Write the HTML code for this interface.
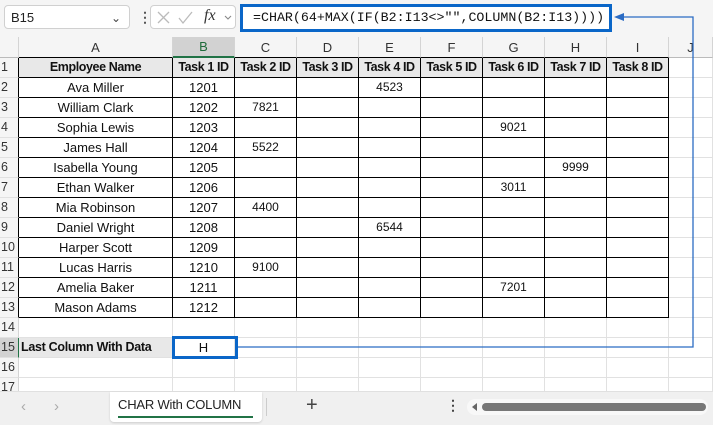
<!DOCTYPE html>
<html><head><meta charset="utf-8">
<style>
body{margin:0;width:713px;height:424px;overflow:hidden;background:#fff;font-family:"Liberation Sans",Arial,sans-serif;position:relative}
.top{position:absolute;left:0;top:0;width:713px;height:37px;background:#f5f5f5}
.nb{position:absolute;left:4px;top:5px;width:126px;height:24px;background:#fff;border:1px solid #d0d0d0;border-radius:4px;font-size:13px;line-height:24px;box-sizing:border-box;padding-left:6px;color:#222}
.fxb{position:absolute;left:150px;top:5px;width:86px;height:24px;background:#fff;border:1px solid #d0d0d0;border-radius:4px;box-sizing:border-box}
.fb{position:absolute;left:240px;top:4px;width:372px;height:28px;border:3px solid #0a66c8;box-sizing:border-box;background:#fff;font-family:"Liberation Mono",monospace;font-size:13.3px;line-height:22px;padding-left:10px;color:#111;white-space:nowrap}
table{position:absolute;left:0;top:37px;border-collapse:separate;border-spacing:0;table-layout:fixed}
td{border-right:1px solid #e1e1e1;border-bottom:1px solid #e1e1e1;height:19px;padding:0;text-align:center;font-size:13px;line-height:19px;white-space:nowrap;overflow:hidden;color:#111}
tr.ch td{background:#f5f5f5;color:#333;font-size:13px;border-right-color:#d4d4d4;border-bottom-color:#bbb}
tr.ch td.k{border-bottom:1px solid #000}
td.rh{background:#f5f5f5;color:#333;text-align:left;padding-left:1px;font-size:12.5px;border-right-color:#d4d4d4}
td.rh.k{border-right:1px solid #000}
td.d{border-right:1px solid #000;border-bottom:1px solid #000}
tr.h td.d{background:#e8e8e8;font-weight:bold;font-size:12.5px;letter-spacing:-0.4px}
td.n{font-size:12px}
.tabs{position:absolute;left:0;top:391px;width:713px;height:33px;background:#f0f0f0;border-top:1px solid #e0e0e0}
</style></head><body>
<div class="top"></div>
<div class="nb">B15<span style="position:absolute;right:8px;top:0;font-size:12px;color:#444">&#8964;</span></div>
<div style="position:absolute;left:138px;top:9px;font-size:14px;color:#555;font-weight:bold">&#8942;</div>
<div class="fxb">
<svg width="86" height="24" style="position:absolute;left:0;top:0"><path d="M7 6l11 11M18 6L7 17" stroke="#bbb" stroke-width="1.3" fill="none"/><path d="M28 12l4 5 9-11" stroke="#bbb" stroke-width="1.3" fill="none"/><path d="M74 10l3 3 3-3" stroke="#888" stroke-width="1.1" fill="none"/></svg>
<span style="position:absolute;left:53px;top:1px;font-family:'Liberation Serif',serif;font-style:italic;font-size:16px;color:#333">fx</span></div>
<div class="fb">=CHAR(64+MAX(IF(B2:I13&lt;&gt;"",COLUMN(B2:I13))))</div>

<table>
<colgroup><col style="width:19px"><col style="width:154px"><col style="width:62px"><col style="width:62px"><col style="width:62px"><col style="width:62px"><col style="width:62px"><col style="width:62px"><col style="width:62px"><col style="width:62px"><col style="width:44px"></colgroup>
<tr class="ch"><td></td><td class="k">A</td><td class="k" style="background:#d2d2d2;color:#1e6b3a;border-bottom:2px solid #217346;height:18px">B</td><td class="k">C</td><td class="k">D</td><td class="k">E</td><td class="k">F</td><td class="k">G</td><td class="k">H</td><td class="k">I</td><td>J</td></tr>
<tr class="h"><td class="rh k">1</td><td class="d">Employee Name</td><td class="d">Task 1 ID</td><td class="d">Task 2 ID</td><td class="d">Task 3 ID</td><td class="d">Task 4 ID</td><td class="d">Task 5 ID</td><td class="d">Task 6 ID</td><td class="d">Task 7 ID</td><td class="d">Task 8 ID</td><td></td></tr>
<tr><td class="rh k">2</td><td class="d">Ava Miller</td><td class="d">1201</td><td class="d"></td><td class="d"></td><td class="d n">4523</td><td class="d"></td><td class="d"></td><td class="d"></td><td class="d"></td><td></td></tr>
<tr><td class="rh k">3</td><td class="d">William Clark</td><td class="d">1202</td><td class="d n">7821</td><td class="d"></td><td class="d"></td><td class="d"></td><td class="d"></td><td class="d"></td><td class="d"></td><td></td></tr>
<tr><td class="rh k">4</td><td class="d">Sophia Lewis</td><td class="d">1203</td><td class="d"></td><td class="d"></td><td class="d"></td><td class="d"></td><td class="d n">9021</td><td class="d"></td><td class="d"></td><td></td></tr>
<tr><td class="rh k">5</td><td class="d">James Hall</td><td class="d">1204</td><td class="d n">5522</td><td class="d"></td><td class="d"></td><td class="d"></td><td class="d"></td><td class="d"></td><td class="d"></td><td></td></tr>
<tr><td class="rh k">6</td><td class="d">Isabella Young</td><td class="d">1205</td><td class="d"></td><td class="d"></td><td class="d"></td><td class="d"></td><td class="d"></td><td class="d n">9999</td><td class="d"></td><td></td></tr>
<tr><td class="rh k">7</td><td class="d">Ethan Walker</td><td class="d">1206</td><td class="d"></td><td class="d"></td><td class="d"></td><td class="d"></td><td class="d n">3011</td><td class="d"></td><td class="d"></td><td></td></tr>
<tr><td class="rh k">8</td><td class="d">Mia Robinson</td><td class="d">1207</td><td class="d n">4400</td><td class="d"></td><td class="d"></td><td class="d"></td><td class="d"></td><td class="d"></td><td class="d"></td><td></td></tr>
<tr><td class="rh k">9</td><td class="d">Daniel Wright</td><td class="d">1208</td><td class="d"></td><td class="d"></td><td class="d n">6544</td><td class="d"></td><td class="d"></td><td class="d"></td><td class="d"></td><td></td></tr>
<tr><td class="rh k">10</td><td class="d">Harper Scott</td><td class="d">1209</td><td class="d"></td><td class="d"></td><td class="d"></td><td class="d"></td><td class="d"></td><td class="d"></td><td class="d"></td><td></td></tr>
<tr><td class="rh k">11</td><td class="d">Lucas Harris</td><td class="d">1210</td><td class="d n">9100</td><td class="d"></td><td class="d"></td><td class="d"></td><td class="d"></td><td class="d"></td><td class="d"></td><td></td></tr>
<tr><td class="rh k">12</td><td class="d">Amelia Baker</td><td class="d">1211</td><td class="d"></td><td class="d"></td><td class="d"></td><td class="d"></td><td class="d n">7201</td><td class="d"></td><td class="d"></td><td></td></tr>
<tr><td class="rh k">13</td><td class="d">Mason Adams</td><td class="d">1212</td><td class="d"></td><td class="d"></td><td class="d"></td><td class="d"></td><td class="d"></td><td class="d"></td><td class="d"></td><td></td></tr>
<tr><td class="rh">14</td><td></td><td></td><td></td><td></td><td></td><td></td><td></td><td></td><td></td><td></td></tr>
<tr><td class="rh" style="background:#d2d2d2;border-right:1px solid #217346">15</td><td style="background:#e8e8e8;font-weight:bold;font-size:12.5px;letter-spacing:-0.3px;text-align:left;padding-left:2px">Last Column With Data</td><td>H</td><td></td><td></td><td></td><td></td><td></td><td></td><td></td><td></td></tr>
<tr><td class="rh">16</td><td></td><td></td><td></td><td></td><td></td><td></td><td></td><td></td><td></td><td></td></tr>
<tr><td class="rh">17</td><td></td><td></td><td></td><td></td><td></td><td></td><td></td><td></td><td></td><td></td></tr>
</table>

<div style="position:absolute;left:172px;top:336px;width:66px;height:23px;border:3px solid #0a66c8;box-sizing:border-box"></div>
<svg width="713" height="424" style="position:absolute;left:0;top:0;pointer-events:none">
<path d="M238 347H693V17H622" stroke="#2b6cc4" stroke-width="1.3" fill="none"/>
<path d="M614 17l10-4v8z" fill="#2b6cc4"/>
</svg>

<div class="tabs">
<span style="position:absolute;left:21px;top:6px;color:#aaa;font-size:15px">&#8249;</span>
<span style="position:absolute;left:54px;top:6px;color:#aaa;font-size:15px">&#8250;</span>
<div style="position:absolute;left:110px;top:0;width:152px;height:30px;background:#fff;border-radius:0 0 4px 4px;box-shadow:0 1px 2px rgba(0,0,0,.15)">
<span style="position:absolute;left:8px;top:5px;font-size:13px;color:#222;letter-spacing:-0.2px">CHAR With COLUMN</span>
<div style="position:absolute;left:8px;top:24px;width:135px;height:2px;background:#217346"></div></div>
<div style="position:absolute;left:266px;top:6px;width:1px;height:18px;background:#ccc"></div>
<span style="position:absolute;left:306px;top:2px;font-size:20px;color:#444">+</span>
<span style="position:absolute;left:446px;top:5px;font-size:14px;color:#444;font-weight:bold">&#8942;</span>
<div style="position:absolute;left:467px;top:7px;width:241px;height:16px;background:#f8f8f8;border-radius:8px"></div>
<svg width="10" height="10" style="position:absolute;left:470px;top:10px"><path d="M2 5l5-4v8z" fill="#666"/></svg>
<div style="position:absolute;left:482px;top:11px;width:224px;height:8px;background:#777;border-radius:4px"></div>
</div>
</body></html>
